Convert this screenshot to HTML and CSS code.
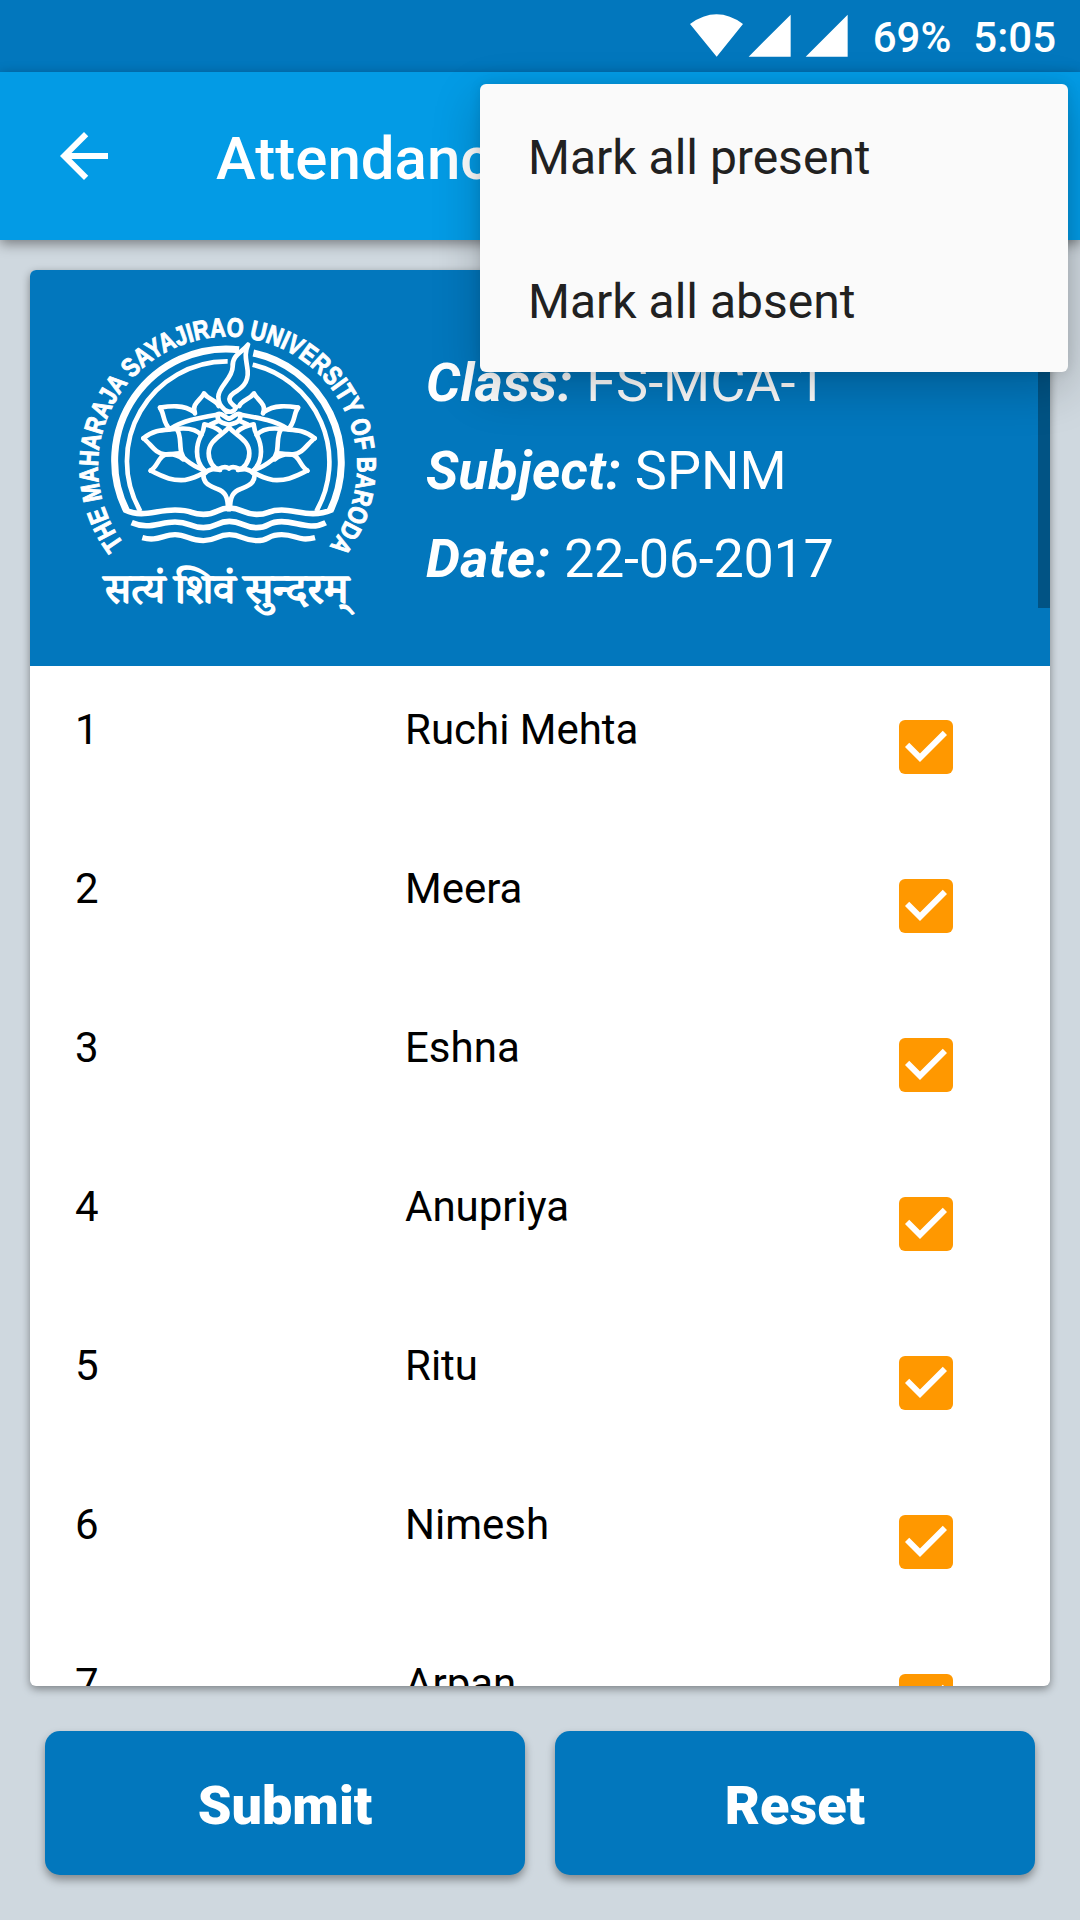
FILE: index.html
```html
<!DOCTYPE html>
<html lang="en">
<head>
<meta charset="utf-8">
<title>Attendance</title>
<link rel="stylesheet" href="styles.css">
</head>
<body>
<svg class="defs" width="0" height="0" aria-hidden="true">
  <symbol id="checked" viewBox="3 3 18 18">
    <rect x="3" y="3" width="18" height="18" rx="2" fill="#ff9800"/>
    <path fill="#fff" d="M10 17l-5-5 1.41-1.41L10 14.17l7.59-7.59L19 8z"/>
  </symbol>
</svg>
<div class="screen">
  <header class="status">
    <svg class="signals" viewBox="90 0 474 216">
      <path d="M90 72Q170 14 249 72L170 170zM266 170L392 44V170zM437 170L563 44V170z" fill="#fff"/>
    </svg>
    <span class="battery">69%</span>
    <span class="clock">5:05</span>
  </header>
  <nav class="appbar">
    <svg class="back" viewBox="0 0 24 24"><path fill="#fff" d="M20 11H7.83l5.59-5.59L12 4l-8 8 8 8 1.41-1.41L7.83 13H20v-2z"/></svg>
    <h1 class="title">Attendance</h1>
  </nav>
  <main class="card">
    <section class="info">
      <svg class="logo" viewBox="0 0 1020 990">
        <defs>
          <path id="ring" d="M192 733A389 389 0 1 1 808 740"/>
          <g id="petals">
            <path d="M297 262C275 288 236 300 236 340C236 365 252 388 268 386C280 380 288 379 297 385"/>
            <path d="M270 273C258 262 240 257 223 253C220 290 201 290 201 335C201 360 208 375 222 390"/>
            <path d="M40 295C75 265 110 271 135 267C175 262 200 268 214 285"/>
            <path d="M40 295C60 308 75 342 105 343C120 345 132 339 152 340"/>
            <path d="M140 267C160 290 140 340 168 360C190 378 205 385 222 390"/>
            <path d="M62 392C85 377 85 348 110 343C135 340 150 350 160 358"/>
            <path d="M62 392C100 410 120 423 165 420C190 415 205 408 218 400"/>
            <path d="M90 203C120 198 160 193 193 216"/>
            <path d="M90 203C105 225 98 250 120 267C160 242 200 235 262 224"/>
            <path d="M195 220C183 190 213 180 222 160C235 179 258 180 266 198"/>
            <path d="M262 224C262 250 285 250 297 255M262 224C275 214 284 234 297 236M240 254L262 244"/>
            <path d="M221 396C215 430 240 437 262 447C285 455 294 470 294 508M222 402C238 382 258 388 270 390"/>
          </g>
        </defs>
        <g fill="none" stroke="#fff">
          <path stroke-width="21" d="M200 633A335 335 0 0 1 537 149M580 159A335 335 0 0 1 810 633"/>
          <path stroke-width="14" d="M241 634A300 300 0 0 1 503 184M578 194A300 300 0 0 1 769 634"/>
          <path stroke-width="17" d="M195 630C250 655 285 630 345 630S385 643 430 643S470 624 508 624S550 643 590 643S620 630 665 630S755 655 815 630"/>
          <path stroke-width="17" d="M215 668C265 690 300 666 345 666S390 683 430 683S470 664 508 664S550 683 590 683S620 665 665 665S750 692 797 668"/>
          <path stroke-width="16" d="M247 713C290 726 310 704 345 704S390 722 430 722S470 704 508 704S550 722 590 722S620 704 665 704S715 726 765 713"/>
          <g transform="translate(210 120)" stroke-width="14" stroke-linejoin="round" stroke-linecap="round">
            <use href="#petals"/>
            <use href="#petals" transform="translate(594 0) scale(-1 1)"/>
            <path d="M354 14C335 38 306 45 308 80C308 115 265 140 265 170C265 195 276 200 290 216M354 14C341 45 350 62 353 92C356 130 334 145 310 160C290 175 298 187 318 202C312 216 300 218 290 212"/>
          </g>
        </g>
        <text class="motto-ring" textLength="1732" lengthAdjust="spacingAndGlyphs"><textPath href="#ring" textLength="1732" lengthAdjust="spacingAndGlyphs">THE MAHARAJA SAYAJIRAO UNIVERSITY OF BARODA</textPath></text>
        <g class="motto">
          <text x="133" y="908" textLength="182" lengthAdjust="spacingAndGlyphs">सत्यं</text>
          <text x="345" y="908" textLength="180" lengthAdjust="spacingAndGlyphs">शिवं</text>
          <text x="553" y="908" textLength="312" lengthAdjust="spacingAndGlyphs">सुन्दरम्</text>
        </g>
      </svg>
      <div class="details">
        <p><b>Class:</b> FS-MCA-1</p>
        <p><b>Subject:</b> SPNM</p>
        <p><b>Date:</b> <span class="date">22-06-2017</span></p>
      </div>
      <i class="scrollbar"></i>
    </section>
    <ul class="students">
      <li><span>1</span><span>Ruchi Mehta</span><svg class="box"><use href="#checked"/></svg></li>
      <li><span>2</span><span>Meera</span><svg class="box"><use href="#checked"/></svg></li>
      <li><span>3</span><span>Eshna</span><svg class="box"><use href="#checked"/></svg></li>
      <li><span>4</span><span>Anupriya</span><svg class="box"><use href="#checked"/></svg></li>
      <li><span>5</span><span>Ritu</span><svg class="box"><use href="#checked"/></svg></li>
      <li><span>6</span><span>Nimesh</span><svg class="box"><use href="#checked"/></svg></li>
      <li><span>7</span><span>Arpan</span><svg class="box"><use href="#checked"/></svg></li>
    </ul>
  </main>
  <footer class="actions">
    <button>Submit</button>
    <button>Reset</button>
  </footer>
  <div class="menu">
    <div>Mark all present</div>
    <div>Mark all absent</div>
  </div>
</div>
</body>
</html>
```
FILE: styles.css
```css
* { box-sizing: border-box; margin: 0; padding: 0; }
body { font-family: Roboto, "Noto Sans", sans-serif; background: #cfd8dc; }
.defs { position: absolute; }
.screen {
  position: relative;
  width: 1080px;
  height: 1920px;
  overflow: hidden;
  background: #cfd8df;
  display: flex;
  flex-direction: column;
}
.status {
  height: 72px;
  flex: none;
  background: #0277bd;
  color: #fff;
  display: flex;
  justify-content: flex-end;
  padding-right: 24px;
  font-size: 42px;
  font-weight: 500;
  line-height: 76px;
}
.signals { width: 158px; height: 72px; }
.battery { margin-left: 25px; }
.clock { margin-left: 22px; }
.appbar {
  height: 168px;
  flex: none;
  background: #039be5;
  color: #fff;
  display: flex;
  align-items: center;
  padding-left: 48px;
  box-shadow: 0 4px 12px rgba(0, 0, 0, .42);
}
.back { width: 72px; height: 72px; }
.title { margin-left: 96px; font-size: 60px; font-weight: 500; line-height: 70px; padding-top: 5px; }
.card {
  height: 1416px;
  flex: none;
  margin: 30px 30px 0;
  border-radius: 6px;
  overflow: hidden;
  background: #fff;
  box-shadow: 0 3px 8px rgba(0, 0, 0, .4);
}
.info {
  position: relative;
  height: 396px;
  background: #0277bd;
  color: #fff;
  display: flex;
}
.logo { width: 340px; height: 330px; margin: 30px 0 0 30px; flex: none; }
.motto-ring { font: bold 80px "Liberation Sans Narrow", "Liberation Sans", sans-serif; fill: #fff; stroke: #fff; stroke-width: 3px; }
.motto { font: 400 124px "Noto Serif Devanagari", "Noto Sans Devanagari", "Noto Sans", serif; fill: #fff; stroke: #fff; stroke-width: 5px; stroke-linejoin: round; }
.details { margin: 69px 0 0 26px; font-size: 54px; line-height: 88px; white-space: nowrap; }
.details b { font-style: italic; letter-spacing: .3px; }
.date { letter-spacing: -.3px; }
.scrollbar { position: absolute; right: 0; top: 0; width: 12px; height: 338px; background: #015384; }
.students { list-style: none; }
.students li {
  height: 159px;
  display: grid;
  grid-template-columns: 330px 494px 54px;
  padding: 39px 0 0 45px;
  font-size: 42px;
  line-height: 50px;
  color: #000;
}
.box { width: 54px; height: 54px; margin-top: 15px; }
.actions { display: flex; gap: 30px; padding: 45px 45px 0; }
.actions button {
  width: 480px;
  height: 144px;
  border: 0;
  border-radius: 15px;
  background: #0277bd;
  color: #fff;
  font: 900 54px Roboto, sans-serif;
  padding-top: 5px;
  box-shadow: 0 5px 9px rgba(0, 0, 0, .36);
}
.menu {
  position: absolute;
  left: 480px;
  top: 84px;
  width: 588px;
  height: 288px;
  border-radius: 6px;
  background: #fafafa;
  box-shadow: 0 16px 48px rgba(0, 0, 0, .22), 0 0 12px rgba(0, 0, 0, .1);
  color: #212121;
  font-size: 48px;
}
.menu div { height: 144px; line-height: 148px; padding-left: 48px; }
```
